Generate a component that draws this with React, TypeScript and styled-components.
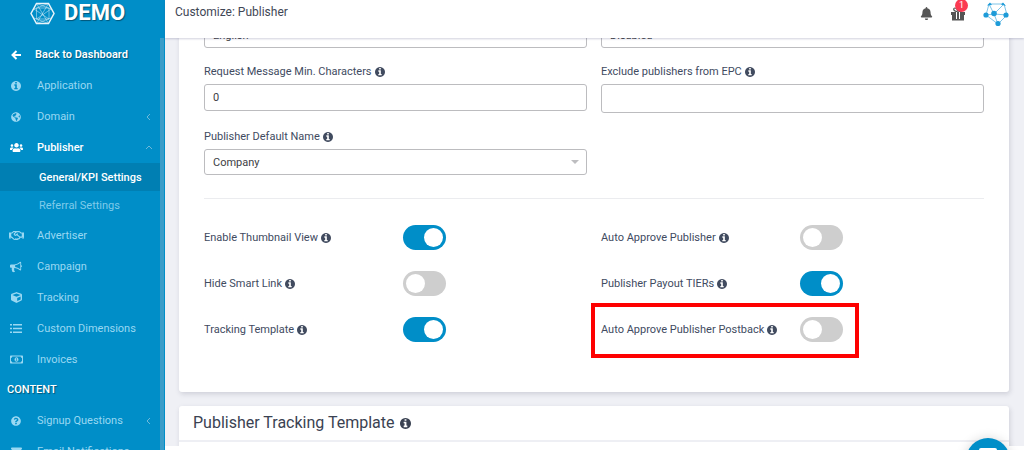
import React from "react";
import styled, { createGlobalStyle, css } from "styled-components";
import {
  FaBell,
  FaCube,
  FaEnvelope,
  FaGlobeAmericas,
  FaQuestionCircle,
  FaRegHandshake,
  FaRegMoneyBillAlt,
  FaUsers,
} from "react-icons/fa";

const blue = "#008ec8";
const ink = "#414b5f";

const GlobalStyle = createGlobalStyle`
  *, *::before, *::after { box-sizing: border-box; }
  body {
    margin: 0;
    background: #fff;
    color: ${ink};
    font-family: Roboto, "Noto Sans", sans-serif;
    font-size: 11px;
    line-height: 15px;
  }
  button, input, select { font: inherit; color: inherit; }
  ul { list-style: none; margin: 0; padding: 0; }
`;

const Shell = styled.div`
  display: flex;
  height: 100vh;
  overflow: hidden;
`;

const Sidebar = styled.aside`
  display: flex;
  flex-direction: column;
  flex: 0 0 165px;
  background: ${blue};
  color: #fff;
`;

const Brand = styled.a`
  display: flex;
  align-items: center;
  gap: 9px;
  flex: 0 0 38px;
  padding: 0 0 12px 30px;
  color: #fff;
  font-size: 22px;
  font-weight: 700;
  line-height: 26px;
  text-decoration: none;
  text-shadow: 1px 1px 1px rgba(0, 0, 0, 0.4);
`;

const SideScroll = styled.nav`
  flex: 1;
  min-height: 0;
  overflow: hidden;
  padding-top: 1px;
  border-right: 4px solid #3a9dc9;
  margin-right: 1px;
`;

const NavLink = styled.a<{ $active?: boolean; $strong?: boolean }>`
  display: flex;
  align-items: center;
  gap: ${(p) => (p.$strong ? 11 : 13)}px;
  height: 31px;
  padding: 0 8px;
  color: ${(p) => (p.$active || p.$strong ? "#fff" : "#9ad8f2")};
  font-weight: ${(p) => (p.$strong ? 600 : p.$active ? 500 : 400)};
  text-decoration: none;
  white-space: nowrap;
  ${(p) => p.$strong && css`text-shadow: 1px 1px 1px rgba(0, 0, 0, 0.4);`}
`;

const NavIcon = styled.span`
  display: flex;
  justify-content: center;
  flex: 0 0 16px;
`;

const Chevron = styled.svg`
  width: 7px;
  height: 7px;
  margin-left: auto;
  fill: none;
  stroke: #6fb9da;
`;

const SubList = styled.ul`
  padding-bottom: 1px;
`;

const SubLink = styled.a<{ $active?: boolean }>`
  display: flex;
  align-items: center;
  height: 28px;
  padding-left: 39px;
  background: ${(p) => (p.$active ? "#007fb3" : "transparent")};
  color: ${(p) => (p.$active ? "#fff" : "#7fcbea")};
  font-weight: ${(p) => (p.$active ? 500 : 400)};
  text-decoration: none;
`;

const NavHeading = styled.h2`
  margin: 0;
  padding-left: 7px;
  font-size: 11px;
  font-weight: 500;
  line-height: 30px;
  text-shadow: 1px 1px 1px rgba(0, 0, 0, 0.4);
`;

const Main = styled.div`
  display: flex;
  flex-direction: column;
  flex: 1;
  min-width: 0;
`;

const TopBar = styled.header`
  display: flex;
  justify-content: space-between;
  flex: 0 0 38px;
  padding: 0 15px 0 10px;
  background: #fff;
  box-shadow: 0 1px 2px rgba(70, 70, 120, 0.25);
  z-index: 1;
`;

const PageTitle = styled.h1`
  margin: 0;
  color: #3f4756;
  font-size: 12px;
  font-weight: 400;
  line-height: 24px;
`;

const Actions = styled.div`
  display: flex;
  align-items: center;
  height: 27px;
  gap: 18px;
`;

const IconButton = styled.button`
  position: relative;
  display: flex;
  padding: 0;
  border: 0;
  background: none;
  color: #555;
`;

const Badge = styled.span`
  position: absolute;
  top: -8px;
  right: -3px;
  width: 13px;
  height: 13px;
  border-radius: 50%;
  background: #fb3a52;
  color: #fff;
  font-size: 9px;
  line-height: 13px;
  text-align: center;
`;

const Content = styled.main`
  flex: 1;
  min-height: 0;
  overflow: hidden;
  margin-bottom: 4px;
  padding: 0 15px 0 14px;
  background: #eff0f5;
`;

const Card = styled.section`
  margin-bottom: 14px;
  background: #fff;
  border-radius: 3px;
  box-shadow: 1px 2px 5px rgba(60, 60, 90, 0.18);
`;

const SettingsCard = styled(Card)`
  margin-top: -16px;
  padding: 0 25px 50px;
`;

const FieldGrid = styled.div`
  display: grid;
  grid-template-columns: 1fr 1fr;
  align-items: start;
  column-gap: 14px;
`;

const Field = styled.div`
  display: flex;
  flex-direction: column;
  padding-bottom: 16px;
`;

const Label = styled.label`
  display: flex;
  align-items: center;
  gap: 3px;
  white-space: nowrap;
`;

const FieldLabel = styled(Label)`
  margin-bottom: 5px;
`;

const controlStyle = css`
  width: 100%;
  padding: 0 8px;
  border: 1px solid #bcbcbf;
  border-radius: 3px;
  background: #fff;
  color: #404044;
`;

const TextInput = styled.input<{ $tall?: boolean }>`
  ${controlStyle}
  height: ${(p) => (p.$tall ? 29 : 27)}px;
`;

const SelectWrap = styled.div`
  display: grid;
  align-items: center;
  > * { grid-area: 1 / 1; }
`;

const Select = styled.select`
  ${controlStyle}
  height: 26px;
  appearance: none;
`;

const Caret = styled.svg`
  justify-self: end;
  width: 8px;
  height: 4px;
  margin-right: 8px;
  fill: #bdbdc0;
  pointer-events: none;
`;

const Divider = styled.hr`
  margin: 7px 0 26px;
  border: 0;
  border-top: 1px solid #ebecef;
`;

const ToggleGrid = styled(FieldGrid)`
  row-gap: 21px;
`;

const ToggleRow = styled.div<{ $highlighted?: boolean }>`
  position: relative;
  display: grid;
  grid-template-columns: 13fr 12fr;
  align-items: center;
  ${(p) =>
    p.$highlighted &&
    css`
      &::after {
        content: "";
        position: absolute;
        top: -14px;
        left: -10px;
        width: 268px;
        height: 55px;
        border: 4px solid #fe0000;
        pointer-events: none;
      }
    `}
`;

const Toggle = styled.input`
  appearance: none;
  width: 43px;
  height: 25px;
  margin: 0;
  padding: 3px;
  border-radius: 13px;
  background: #cecece;
  &::before {
    content: "";
    display: block;
    width: 19px;
    height: 19px;
    border-radius: 50%;
    background: #fff;
  }
  &:checked { background: ${blue}; }
  &:checked::before { margin-left: 18px; }
`;

const CardTitle = styled.h2`
  display: flex;
  align-items: center;
  gap: 5px;
  margin: 0;
  padding: 0 14px;
  border-bottom: 2px solid #eeeff4;
  color: #3a4252;
  font-size: 16px;
  font-weight: 400;
  line-height: 34px;
`;

const CardBody = styled.div`
  height: 120px;
`;

const ChatButton = styled.button`
  position: fixed;
  right: 14px;
  bottom: -32px;
  display: flex;
  justify-content: center;
  width: 44px;
  height: 44px;
  padding: 10px 0 0;
  border: 0;
  border-radius: 50%;
  background: ${blue};
  box-shadow: 0 1px 12px rgba(0, 0, 0, 0.18);
  z-index: 2;
`;

const HexLogo = () => (
  <svg width="25" height="23" viewBox="0 0 25 23" fill="none" stroke="#e8f4fa" aria-hidden="true">
    <path d="M6.5 1.5h12l5.5 10-5.5 10h-12L1 11.5z" strokeWidth="1.5" />
    <path
      d="M6.5 1.5l12 20M18.5 1.5l-12 20M6.5 6h12.500v11H6.500zM4 7l14.500-5.500M4 16l14.500 5.500M21 7 6.500 1.500M21 16 6.500 21.500M6.500 17 21 7M4 7l15 10"
      strokeWidth="0.6"
      opacity="0.8"
    />
  </svg>
);

const NetworkLogo = () => (
  <svg width="26" height="26" viewBox="0 0 26 26" aria-hidden="true">
    <path d="M6 3h15l3 11-9 9L3 14zM6 3l5 10 10-10M3 14l8-1 13 1M11 13l4 10" fill="none" stroke="#7cc4e8" strokeWidth="1" />
    <g fill="#1d9bd8">
      <circle cx="3" cy="14" r="2.600" />
      <circle cx="11" cy="12.500" r="2.800" />
      <circle cx="23" cy="14" r="2.600" />
      <circle cx="15" cy="22.500" r="2.600" />
      <path d="M4 4.500 7 1.500l2 2.500zM18 3.500l2-2 3 3.500z" />
    </g>
  </svg>
);

const Info = ({ size = 10 }: { size?: number }) => (
  <svg width={size} height={size} viewBox="128 128 1536 1536" fill="currentColor" aria-hidden="true">
    <path d="M1152 1376v-160q0-14-9-23t-23-9h-96v-512q0-14-9-23t-23-9h-320q-14 0-23 9t-9 23v160q0 14 9 23t23 9h96v320h-96q-14 0-23 9t-9 23v160q0 14 9 23t23 9h448q14 0 23-9t9-23zm-128-896v-160q0-14-9-23t-23-9h-192q-14 0-23 9t-9 23v160q0 14 9 23t23 9h192q14 0 23-9t9-23zm640 416q0 209-103 385.5t-279.5 279.5-385.5 103-385.5-103-279.5-279.5-103-385.5 103-385.5 279.5-279.5 385.5-103 385.5 103 279.5 279.5 103 385.5z" />
  </svg>
);

const BullhornIcon = () => (
  <svg width="12" height="12" viewBox="0 0 1792 1792" fill="currentColor" aria-hidden="true">
    <path d="M1664 640q53 0 90.5 37.5t37.5 90.5-37.5 90.5-90.5 37.5v384q0 52-38 90t-90 38q-417-347-812-380-58 19-91 66t-31 100.5 40 92.5q-20 33-23 65.5t6 58 33.500 55 48 50 61.500 50.500q-29 58-111.500 83t-168.500 11.500-132-55.500q-7-23-29.500-87.500t-32-94.500-23-89-15-101 3.500-98.500 22-110.500h-122q-66 0-113-47t-47-113v-192q0-66 47-113t113-47h480q435 0 896-384 52 0 90 38t38 90v384zm-128 604v-954q-394 302-768 343v270q377 42 768 341z" />
  </svg>
);

const ArrowIcon = () => (
  <svg width="10" height="10" viewBox="0 0 10 10" fill="none" stroke="currentColor" strokeWidth="2" aria-hidden="true">
    <path d="M5.500 1 1.500 5l4 4M2 5h8" />
  </svg>
);

const ListIcon = () => (
  <svg width="12" height="9" viewBox="0 0 12 9" fill="currentColor" aria-hidden="true">
    <path d="M0 0h2v1.500H0zM3 0h9v1.500H3zM0 3.750h2v1.500H0zM3 3.750h9v1.500H3zM0 7.500h2V9H0zM3 7.500h9V9H3z" />
  </svg>
);

const GiftIcon = () => (
  <svg width="14" height="14" viewBox="0 0 14 14" fill="currentColor" aria-hidden="true">
    <path d="M0 5h5v3H0zM6 5h2v7H6zM9 5h5v3H9zM1 8h4v4h4V8h4v5.500H1z" />
    <path d="M6.500 4.500C2 4.500 2 1 4 1c1.500 0 2.200 1.500 3 2.800C7.800 2.500 8.500 1 10 1c2 0 2 3.500-2.500 3.500" fill="none" stroke="currentColor" strokeWidth="1.200" />
  </svg>
);

type Item = { label: string; icon: React.ReactNode; chevron?: "left" | "up"; active?: boolean };

const NavItem = ({ label, icon, chevron, active }: Item) => (
  <NavLink href="#" $active={active}>
    <NavIcon>{icon}</NavIcon>
    {label}
    {chevron && (
      <Chevron viewBox="0 0 7 7" aria-hidden="true">
        <path d={chevron === "left" ? "M5 1 2 4l3 3" : "M1 5l3-3 3 3"} />
      </Chevron>
    )}
  </NavLink>
);

const Dropdown = ({ id, name, value }: { id?: string; name?: string; value: string }) => (
  <SelectWrap>
    <Select id={id} aria-label={name}>
      <option>{value}</option>
    </Select>
    <Caret viewBox="0 0 8 4" aria-hidden="true">
      <path d="M0 0h8L4 4z" />
    </Caret>
  </SelectWrap>
);

const toggles = [
  { id: "thumb", label: "Enable Thumbnail View", on: true },
  { id: "approve", label: "Auto Approve Publisher", on: false },
  { id: "smart", label: "Hide Smart Link", on: false },
  { id: "tiers", label: "Publisher Payout TIERs", on: true },
  { id: "template", label: "Tracking Template", on: true },
  { id: "postback", label: "Auto Approve Publisher Postback", on: false, highlighted: true },
];

export default function App() {
  return (
    <>
      <GlobalStyle />
      <Shell>
        <Sidebar>
          <Brand href="#">
            <HexLogo />
            DEMO
          </Brand>
          <SideScroll>
            <NavLink href="#" $strong>
              <NavIcon><ArrowIcon /></NavIcon>
              Back to Dashboard
            </NavLink>
            <NavItem label="Application" icon={<Info />} />
            <NavItem label="Domain" icon={<FaGlobeAmericas size={10} />} chevron="left" />
            <NavItem label="Publisher" icon={<FaUsers size={13} />} chevron="up" active />
            <SubList>
              <li><SubLink href="#" $active>General/KPI Settings</SubLink></li>
              <li><SubLink href="#">Referral Settings</SubLink></li>
            </SubList>
            <NavItem label="Advertiser" icon={<FaRegHandshake size={15} />} />
            <NavItem label="Campaign" icon={<BullhornIcon />} />
            <NavItem label="Tracking" icon={<FaCube size={11} />} />
            <NavItem label="Custom Dimensions" icon={<ListIcon />} />
            <NavItem label="Invoices" icon={<FaRegMoneyBillAlt size={13} />} />
            <NavHeading>CONTENT</NavHeading>
            <NavItem label="Signup Questions" icon={<FaQuestionCircle size={10} />} chevron="left" />
            <NavItem label="Email Notifications" icon={<FaEnvelope size={11} />} />
          </SideScroll>
        </Sidebar>
        <Main>
          <TopBar>
            <PageTitle>Customize: Publisher</PageTitle>
            <Actions>
              <IconButton aria-label="Notifications"><FaBell size={13} /></IconButton>
              <IconButton aria-label="Rewards">
                <GiftIcon />
                <Badge>1</Badge>
              </IconButton>
              <IconButton aria-label="Account"><NetworkLogo /></IconButton>
            </Actions>
          </TopBar>
          <Content>
            <SettingsCard>
              <FieldGrid>
                <Field>
                  <Dropdown name="Language" value="English" />
                </Field>
                <Field>
                  <Dropdown name="Status" value="Disabled" />
                </Field>
                <Field>
                  <FieldLabel htmlFor="min-chars">Request Message Min. Characters <Info /></FieldLabel>
                  <TextInput id="min-chars" defaultValue="0" />
                </Field>
                <Field>
                  <FieldLabel htmlFor="exclude">Exclude publishers from EPC <Info /></FieldLabel>
                  <TextInput id="exclude" $tall />
                </Field>
                <Field>
                  <FieldLabel htmlFor="default-name">Publisher Default Name <Info /></FieldLabel>
                  <Dropdown id="default-name" value="Company" />
                </Field>
              </FieldGrid>
              <Divider />
              <ToggleGrid>
                {toggles.map((t) => (
                  <ToggleRow key={t.id} $highlighted={t.highlighted}>
                    <Label htmlFor={t.id}>{t.label} <Info /></Label>
                    <Toggle id={t.id} type="checkbox" role="switch" defaultChecked={t.on} />
                  </ToggleRow>
                ))}
              </ToggleGrid>
            </SettingsCard>
            <Card>
              <CardTitle>Publisher Tracking Template <Info size={11} /></CardTitle>
              <CardBody />
            </Card>
          </Content>
        </Main>
        <ChatButton aria-label="Open chat">
          <svg width="18" height="16" viewBox="0 0 18 16" aria-hidden="true">
            <path d="M2 0h14a2 2 0 0 1 2 2v12l-4-3H2a2 2 0 0 1-2-2V2a2 2 0 0 1 2-2z" fill="#fff" />
          </svg>
        </ChatButton>
      </Shell>
    </>
  );
}
